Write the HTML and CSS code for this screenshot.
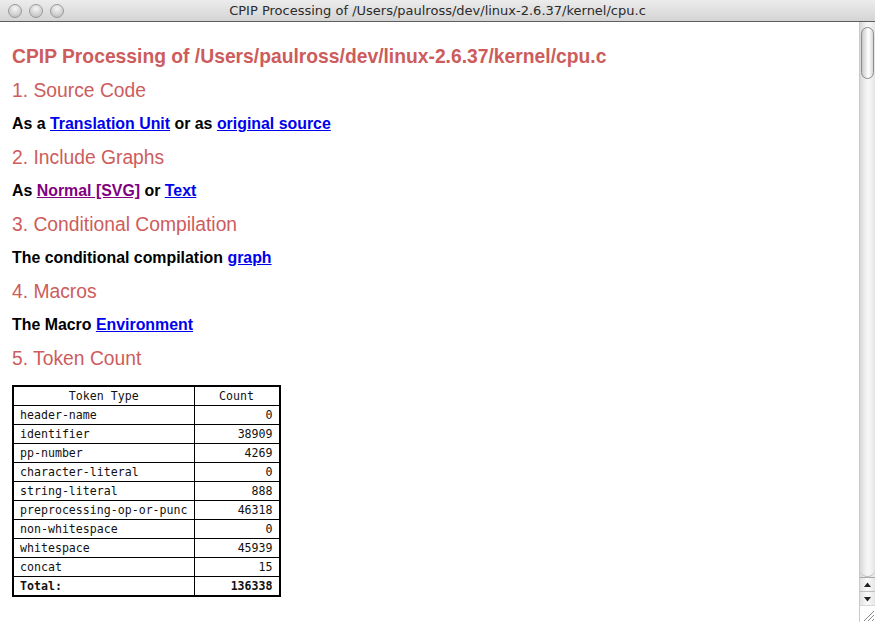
FILE: index.html
```html
<!DOCTYPE html>
<html>
<head>
<meta charset="utf-8">
<title>CPIP Processing</title>
<link rel="stylesheet" href="styles.css">
</head>
<body>
<div class="window">
  <div class="titlebar">
    <div class="lights">
      <span class="light"></span><span class="light"></span><span class="light"></span>
    </div>
    <div class="title">CPIP Processing of /Users/paulross/dev/linux-2.6.37/kernel/cpu.c</div>
  </div>
  <div class="main">
    <div class="content">
      <h1>CPIP Processing of /Users/paulross/dev/linux-2.6.37/kernel/cpu.c</h1>
      <h2>1. Source Code</h2>
      <p>As a <a href="#">Translation Unit</a> or as <a href="#">original source</a></p>
      <h2>2. Include Graphs</h2>
      <p>As <a href="#" class="visited">Normal [SVG]</a> or <a href="#">Text</a></p>
      <h2>3. Conditional Compilation</h2>
      <p>The conditional compilation <a href="#">graph</a></p>
      <h2>4. Macros</h2>
      <p>The Macro <a href="#">Environment</a></p>
      <h2>5. Token Count</h2>
      <table class="tokens">
        <tr><th class="c1">Token Type</th><th class="c2">Count</th></tr>
        <tr><td>header-name</td><td class="num">0</td></tr>
        <tr><td>identifier</td><td class="num">38909</td></tr>
        <tr><td>pp-number</td><td class="num">4269</td></tr>
        <tr><td>character-literal</td><td class="num">0</td></tr>
        <tr><td>string-literal</td><td class="num">888</td></tr>
        <tr><td>preprocessing-op-or-punc</td><td class="num">46318</td></tr>
        <tr><td>non-whitespace</td><td class="num">0</td></tr>
        <tr><td>whitespace</td><td class="num">45939</td></tr>
        <tr><td>concat</td><td class="num">15</td></tr>
        <tr class="total"><td>Total:</td><td class="num">136338</td></tr>
      </table>
    </div>
    <div class="scrollbar">
      <div class="track"><div class="thumb"></div></div>
      <div class="arrow up"><svg width="15" height="12" viewBox="0 0 15 12"><path d="M4 8 L7.5 3.5 L11 8 Z" fill="#222"/></svg></div>
      <div class="arrow down"><svg width="15" height="12" viewBox="0 0 15 12"><path d="M4 4 L7.5 8.5 L11 4 Z" fill="#222"/></svg></div>
      <div class="grip"><svg width="15" height="16" viewBox="0 0 15 16"><path d="M4 15 L14 5 M8 15 L14 9 M12 15 L14 13" stroke="#8a8a8a" stroke-width="1"/></svg></div>
    </div>
  </div>
</div>
</body>
</html>
```
FILE: styles.css
```css
html, body {
  margin: 0;
  padding: 0;
  background: #fff;
}
.window {
  width: 875px;
  height: 622px;
  display: flex;
  flex-direction: column;
  overflow: hidden;
}
.titlebar {
  height: 21px;
  border-bottom: 1px solid #5e5e5e;
  background: linear-gradient(#ececec, #d4d4d4);
  display: flex;
  align-items: center;
}
.lights {
  display: flex;
  gap: 7px;
  padding-left: 8px;
}
.light {
  width: 12px;
  height: 12px;
  border-radius: 50%;
  border: 1px solid #9a9a9a;
  background: radial-gradient(circle at 50% 30%, #f6f6f6, #c9c9c9 70%, #b8b8b8);
}
.title {
  flex: 1;
  text-align: center;
  font-family: "DejaVu Sans", "Liberation Sans", sans-serif;
  font-size: 13px;
  color: #2b2b2b;
  margin-left: -64px;
}
.main {
  flex: 1;
  display: flex;
  min-height: 0;
}
.content {
  flex: 1;
  padding: 23px 0 0 12px;
  font-family: "Liberation Sans", Arial, sans-serif;
  color: #000;
}
h1, h2 {
  color: #cd5c5c;
  font-size: 19.3px;
  line-height: 24px;
  margin: 0 0 11px;
}
h1 {
  font-weight: bold;
  margin-bottom: 10px;
}
h2 {
  font-weight: normal;
}
p {
  font-size: 15.9px;
  line-height: 20px;
  font-weight: bold;
  margin: 0 0 12px;
}
a {
  color: #0000ee;
}
a.visited {
  color: #800080;
}
.tokens {
  margin-top: 14px;
  border-collapse: collapse;
  border: 2px solid #000;
  font-family: "DejaVu Sans Mono", "Liberation Mono", monospace;
  font-size: 11.6px;
  color: #111;
}
.tokens th, .tokens td {
  border: 1px solid #000;
  padding: 0 6px;
  height: 18px;
  line-height: 18px;
  text-align: left;
  white-space: nowrap;
}
.tokens th {
  font-weight: normal;
  text-align: center;
}
.tokens .c2 {
  width: 72px;
}
.tokens td.num {
  text-align: right;
}
.tokens .total td {
  font-weight: bold;
}
.scrollbar {
  width: 15px;
  display: flex;
  flex-direction: column;
  background: linear-gradient(90deg, #d8d8d8, #f2f2f2 40%, #f7f7f7 60%, #e4e4e4);
  border-left: 1px solid #c9c9c9;
}
.track {
  flex: 1;
  padding: 5px 1px 0 1px;
  border-bottom-left-radius: 7px;
  border-bottom-right-radius: 7px;
  border-bottom: 1px solid #bcbcbc;
}
.thumb {
  height: 50px;
  border-radius: 7px;
  border: 1px solid #8c8c8c;
  background: linear-gradient(90deg, #c8c8c8, #f4f4f4 45%, #ffffff 60%, #d6d6d6);
}
.arrow {
  height: 13px;
  display: flex;
  align-items: center;
  border-top: 1px solid #bdbdbd;
  background: linear-gradient(90deg, #e2e2e2, #fafafa 50%, #e6e6e6);
}
.arrow.up {
  border-top: 1px solid #a9a9a9;
}
.grip {
  height: 16px;
  background: #fff;
  border-top: 1px solid #d8d8d8;
}
.grip svg, .arrow svg {
  display: block;
}
```
